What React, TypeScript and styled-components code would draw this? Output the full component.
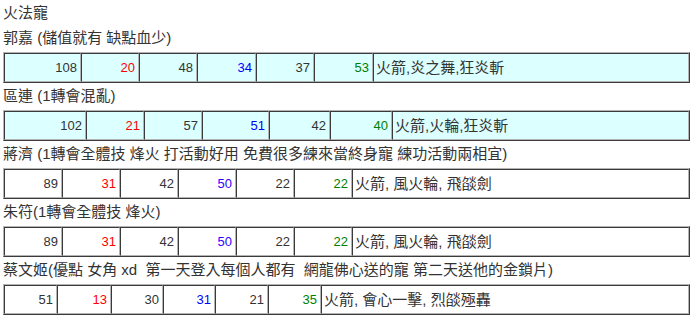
import React from "react";
import styled, { createGlobalStyle } from "styled-components";

const Global = createGlobalStyle`
  html, body { margin: 0; padding: 0; background: #fff; }
  body { font-family: "Liberation Sans", "Noto Sans CJK TC", sans-serif; color: #333; }
`;

const Page = styled.div`
  padding: 0 3px;
  width: 687px;
`;

const Title = styled.div`
  font-size: 15px;
  line-height: 25px;
  height: 25px;
  white-space: nowrap;
`;

const Label = styled.div`
  font-size: 15px;
  line-height: 26px;
  height: 26px;
  white-space: nowrap;
`;

const Table = styled.table<{ $bg: string }>`
  width: 687px;
  margin-top: 1px;
  table-layout: fixed;
  border-collapse: separate;
  border-spacing: 0;
  border: 1px solid;
  border-color: #b4b4b4 #3a3a3a #3a3a3a #b4b4b4;
  background: ${(p) => p.$bg};
`;

const Col = styled.col<{ $w?: number }>`
  width: ${(p) => (p.$w ? `${p.$w}px` : "auto")};
`;

const Num = styled.td<{ $color: string }>`
  box-sizing: border-box;
  height: 29px;
  padding: 0 3px 0 2px;
  border: 1px solid;
  border-color: #3a3a3a #b4b4b4 #b4b4b4 #3a3a3a;
  text-align: right;
  font-size: 13px;
  line-height: 17px;
  color: ${(p) => p.$color};
`;

const Skills = styled.td`
  box-sizing: border-box;
  height: 29px;
  padding: 0 2px;
  border: 1px solid;
  border-color: #3a3a3a #b4b4b4 #b4b4b4 #3a3a3a;
  text-align: left;
  font-size: 15px;
  line-height: 17px;
  color: #333;
  white-space: nowrap;
  overflow: hidden;
`;

const COLORS = ["#333333", "#ff0000", "#333333", "#0000ff", "#333333", "#008000"];
const COLORS_ALT = ["#333333", "#ff0000", "#333333", "#3300ff", "#333333", "#008000"];

type Pet = {
  label: string;
  nums: number[];
  widths: number[];
  skills: string;
  bg: string;
  numColors: string[];
};

const pets: Pet[] = [
  {
    label: "郭嘉 (儲值就有 缺點血少)",
    nums: [108, 20, 48, 34, 37, 53],
    widths: [77, 58, 58, 59, 58, 59],
    skills: "火箭,炎之舞,狂炎斬",
    bg: "#dcffff",
    numColors: COLORS,
  },
  {
    label: "區連 (1轉會混亂)",
    nums: [102, 21, 57, 51, 42, 40],
    widths: [82, 58, 58, 67, 61, 62],
    skills: "火箭,火輪,狂炎斬",
    bg: "#dcffff",
    numColors: COLORS,
  },
  {
    label: "蔣濟 (1轉會全體技 烽火 打活動好用 免費很多練來當終身寵 練功活動兩相宜)",
    nums: [89, 31, 42, 50, 22, 22],
    widths: [58, 58, 58, 58, 58, 58],
    skills: "火箭, 風火輪, 飛燄劍",
    bg: "#ffffff",
    numColors: COLORS_ALT,
  },
  {
    label: "朱符(1轉會全體技 烽火)",
    nums: [89, 31, 42, 50, 22, 22],
    widths: [58, 58, 58, 58, 58, 58],
    skills: "火箭, 風火輪, 飛燄劍",
    bg: "#ffffff",
    numColors: COLORS_ALT,
  },
  {
    label: "蔡文姬(優點 女角 xd \u00a0第一天登入每個人都有 \u00a0網龍佛心送的寵 第二天送他的金鎖片)",
    nums: [51, 13, 30, 31, 21, 35],
    widths: [53, 54, 52, 52, 53, 53],
    skills: "火箭, 會心一擊, 烈燄殛轟",
    bg: "#ffffff",
    numColors: COLORS,
  },
];

export default function App() {
  return (
    <Page>
      <Global />
      <Title>火法寵</Title>
      {pets.map((p) => (
        <React.Fragment key={p.label}>
          <Label>{p.label}</Label>
          <Table $bg={p.bg}>
            <colgroup>
              {p.widths.map((w, i) => (
                <Col key={i} $w={w} />
              ))}
              <Col />
            </colgroup>
            <tbody>
              <tr>
                {p.nums.map((n, i) => (
                  <Num key={i} $color={p.numColors[i]}>
                    {n}
                  </Num>
                ))}
                <Skills>{p.skills}</Skills>
              </tr>
            </tbody>
          </Table>
        </React.Fragment>
      ))}
    </Page>
  );
}
